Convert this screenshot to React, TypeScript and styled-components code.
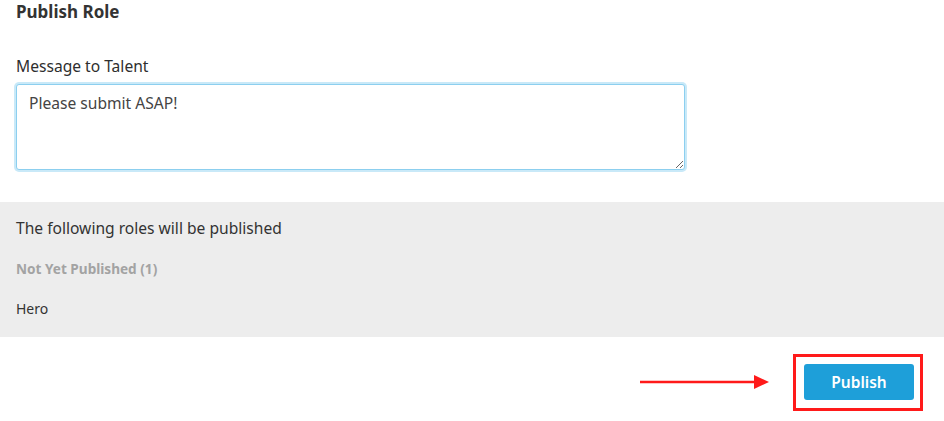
import React, {useState} from 'react';
import styled, {createGlobalStyle} from "styled-components";

const GlobalStyle = createGlobalStyle`
  body {
    margin: 0;
    background: #ffffff;
    font-family: "Noto Sans", "Open Sans", sans-serif;
    color: #333333;
  }
`

const Page = styled.div`
  width: 944px;
  height: 421px;
  display: flex;
  flex-direction: column;
  overflow: hidden;
`
const Top = styled.div`
  padding: 0 16px;
  height: 202px;
  box-sizing: border-box;
`
const Title = styled.h2`
  margin: 0;
  font-size: 17px;
  line-height: 24px;
  font-weight: 700;
  color: #333333;
`
const Label = styled.label`
  display: block;
  margin-top: 30px;
  font-size: 15.6px;
  line-height: 24px;
  font-weight: 400;
  color: #2e2e2e;
`
const MessageBox = styled.textarea`
  display: block;
  margin-top: 6px;
  width: 669px;
  height: 86px;
  box-sizing: border-box;
  padding: 6px 12px;
  border: 1px solid #8ccfef;
  border-radius: 3px;
  box-shadow: 0 0 0 2px #c9e9f8;
  outline: none;
  font-family: "Noto Sans", "Open Sans", sans-serif;
  font-size: 15.6px;
  line-height: 24px;
  color: #444444;
  resize: vertical;
`
const Roles = styled.div`
  background: #ededed;
  height: 135px;
  box-sizing: border-box;
  padding: 14px 16px 0;
`
const RolesHeading = styled.div`
  font-size: 15.6px;
  line-height: 24px;
  color: #333333;
`
const GroupTitle = styled.div`
  margin-top: 20px;
  font-size: 13.6px;
  line-height: 18px;
  font-weight: 700;
  color: #a3a3a3;
`
const RoleItem = styled.div`
  margin-top: 22px;
  font-size: 14px;
  line-height: 18px;
  color: #333333;
`
const Footer = styled.div`
  flex: 1;
  display: flex;
  justify-content: flex-end;
  align-items: flex-start;
  padding: 17px 21px 0 0;
`
const Arrow = styled.svg`
  margin: 20px 24px 0 0;
  display: block;
`
const Highlight = styled.div`
  border: 3px solid #ff1a1a;
  padding: 7px 6px 8px 8px;
`
const PublishButton = styled.button`
  display: block;
  width: 110px;
  height: 36px;
  border: none;
  border-radius: 3px;
  background: #1e9fd9;
  color: #ffffff;
  font-family: "Noto Sans", "Open Sans", sans-serif;
  font-size: 15.5px;
  font-weight: 600;
  cursor: pointer;
`

export default function App() {
    const [message, setMessage] = useState<string>("Please submit ASAP!")

    return (
        <Page>
            <GlobalStyle/>
            <Top>
                <Title>Publish Role</Title>
                <Label htmlFor="msg">Message to Talent</Label>
                <MessageBox id="msg" value={message} onChange={e => setMessage(e.target.value)}/>
            </Top>
            <Roles>
                <RolesHeading>The following roles will be published</RolesHeading>
                <GroupTitle>Not Yet Published (1)</GroupTitle>
                <RoleItem>Hero</RoleItem>
            </Roles>
            <Footer>
                <Arrow width="129" height="16" viewBox="0 0 129 16">
                    <line x1="0" y1="8" x2="116" y2="8" stroke="#ff1a1a" strokeWidth="2.6"/>
                    <polygon points="114,1 129,8 114,15" fill="#ff1a1a"/>
                </Arrow>
                <Highlight>
                    <PublishButton>Publish</PublishButton>
                </Highlight>
            </Footer>
        </Page>
    );
}
